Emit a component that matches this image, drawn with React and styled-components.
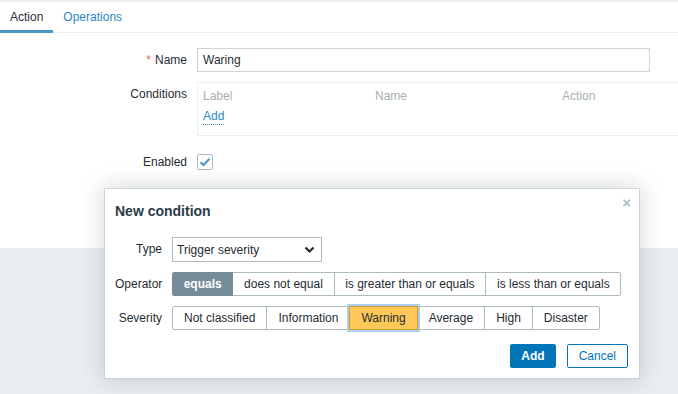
import styled, { createGlobalStyle, css } from 'styled-components'

const GlobalStyle = createGlobalStyle`
  html, body {
    margin: 0;
    padding: 0;
    background: #ebeef0;
  }
  body {
    font-family: Arial, "Liberation Sans", sans-serif;
    font-size: 12px;
    color: #1f2c33;
  }
`

const Page = styled.div`
  position: relative;
  width: 678px;
  height: 394px;
  padding-top: 2px;
  box-sizing: border-box;
  overflow: hidden;
`

const Content = styled.div`
  background: #ffffff;
  height: 246px;
`

const Tabs = styled.div`
  display: flex;
  height: 30px;
  border-bottom: 1px solid #ebeef0;
`

const Tab = styled.div`
  padding: 1px 10px 0;
  line-height: 28px;
  height: 27px;
  font-size: 12px;
  color: ${p => (p.$active ? '#1f2c33' : '#2d87c4')};
  border-bottom: 3px solid ${p => (p.$active ? '#4796c4' : 'transparent')};
`

const Form = styled.div`
  display: grid;
  grid-template-columns: 187px 1fr;
  column-gap: 10px;
  padding-top: 15px;
`

const Label = styled.div`
  text-align: right;
  line-height: 24px;
  color: #1f2c33;
  ${p => p.$top && css`padding-top: ${p.$top}px;`}
`

const Star = styled.span`
  color: #e45959;
  margin-right: 4px;
`

const Field = styled.div`
  ${p => p.$mb && css`margin-bottom: ${p.$mb}px;`}
`

const TextInput = styled.div`
  width: 453px;
  height: 24px;
  box-sizing: border-box;
  border: 1px solid #ccd5d9;
  padding: 0 5px;
  line-height: 22px;
  color: #1f2c33;
`

const CondBox = styled.div`
  border: 1px solid #ebeef0;
  border-right: none;
  height: 54px;
  box-sizing: border-box;
  padding: 3px 5px;
`

const CondHead = styled.div`
  display: grid;
  grid-template-columns: 172px 187px 1fr;
  line-height: 20px;
  color: #a4b0b7;
`

const LinkAdd = styled.span`
  display: inline-block;
  margin-top: 3px;
  color: #2d87c4;
  line-height: 15px;
  border-bottom: 1px dotted #2d87c4;
`

const Checkbox = styled.div`
  margin-top: 4px;
  width: 16px;
  height: 16px;
  box-sizing: border-box;
  border: 1px solid #acbbc2;
  border-radius: 2px;
  display: flex;
  align-items: center;
  justify-content: center;
`

const Required = styled.div`
  margin-top: 12px;
  color: #1f2c33;
`

const Dialog = styled.div`
  position: absolute;
  left: 104px;
  top: 188px;
  width: 536px;
  height: 191px;
  box-sizing: border-box;
  background: #ffffff;
  border: 1px solid #ccd5d9;
  box-shadow: 0 0 20px 2px rgba(40, 60, 70, 0.18);
  padding: 13px 11px 10px 10px;
`

const Close = styled.div`
  position: absolute;
  right: 8px;
  top: 5px;
  color: #acbbc2;
  font-size: 15px;
  font-weight: bold;
`

const Title = styled.h4`
  margin: 0 0 17px 0;
  font-size: 14px;
  font-weight: bold;
  line-height: 18px;
  color: #2c3e47;
`

const DGrid = styled.div`
  display: grid;
  grid-template-columns: 47px 1fr;
  column-gap: 10px;
  row-gap: 10px;
`

const DLabel = styled.div`
  text-align: right;
  line-height: 24px;
`

const Select = styled.div`
  width: 150px;
  height: 25px;
  box-sizing: border-box;
  border: 1px solid #acbbc2;
  display: flex;
  align-items: center;
  justify-content: space-between;
  padding: 0 6px 0 4px;
`

const Segmented = styled.div`
  display: flex;
`

const Seg = styled.div`
  height: 24px;
  box-sizing: border-box;
  padding: 0 ${p => p.$pad}px;
  line-height: 22px;
  border: 1px solid #acbbc2;
  margin-left: -1px;
  position: relative;
  white-space: nowrap;
  &:first-child {
    margin-left: 0;
    border-radius: 2px 0 0 2px;
  }
  &:last-child {
    border-radius: 0 2px 2px 0;
  }
  ${p => p.$selected && css`
    background: #768d99;
    border-color: #768d99;
    color: #ffffff;
    font-weight: bold;
    z-index: 1;
  `}
  ${p => p.$warning && css`
    background: #ffc859;
    border-color: #cf9a2f;
    box-shadow: 0 0 0 2px #a9d0f0;
    z-index: 2;
  `}
`

const Footer = styled.div`
  display: flex;
  justify-content: flex-end;
  gap: 11px;
  margin-top: 14px;
`

const Button = styled.div`
  height: 24px;
  box-sizing: border-box;
  line-height: 22px;
  border-radius: 2px;
  border: 1px solid #0275b8;
  padding: 0 ${p => (p.$primary ? 10 : 11)}px;
  background: ${p => (p.$primary ? '#0275b8' : '#ffffff')};
  color: ${p => (p.$primary ? '#ffffff' : '#0275b8')};
  font-weight: ${p => (p.$primary ? 'bold' : 'normal')};
`

const operators = ['equals', 'does not equal', 'is greater than or equals', 'is less than or equals']
const severities = ['Not classified', 'Information', 'Warning', 'Average', 'High', 'Disaster']

export default function App() {
  return (
    <Page>
      <GlobalStyle />
      <Content>
        <Tabs>
          <Tab $active>Action</Tab>
          <Tab>Operations</Tab>
        </Tabs>
        <Form>
          <Label><Star>*</Star>Name</Label>
          <Field $mb={10}><TextInput>Waring</TextInput></Field>

          <Label $top={-1}>Conditions</Label>
          <Field $mb={14}>
            <CondBox>
              <CondHead>
                <span>Label</span>
                <span>Name</span>
                <span>Action</span>
              </CondHead>
              <LinkAdd>Add</LinkAdd>
            </CondBox>
          </Field>

          <Label>Enabled</Label>
          <Field>
            <Checkbox>
              <svg width="12" height="10" viewBox="0 0 12 10">
                <path d="M1.5 5.2 L4.5 8 L10.5 1.8" fill="none" stroke="#4796c4" strokeWidth="2" />
              </svg>
            </Checkbox>
          </Field>

          <div />
          <Required><Star>*</Star>At least one operation must exist.</Required>
        </Form>
      </Content>

      <Dialog>
        <Close>×</Close>
        <Title>New condition</Title>
        <DGrid>
          <DLabel>Type</DLabel>
          <div>
            <Select>
              <span>Trigger severity</span>
              <svg width="11" height="8" viewBox="0 0 11 8">
                <path d="M1.5 1.5 L5.5 5.5 L9.5 1.5" fill="none" stroke="#1f2c33" strokeWidth="2.2" />
              </svg>
            </Select>
          </div>

          <DLabel>Operator</DLabel>
          <Segmented>
            {operators.map(o => (
              <Seg key={o} $pad={10.7} $selected={o === 'equals'}>{o}</Seg>
            ))}
          </Segmented>

          <DLabel>Severity</DLabel>
          <Segmented>
            {severities.map(s => (
              <Seg key={s} $pad={11} $warning={s === 'Warning'}>{s}</Seg>
            ))}
          </Segmented>
        </DGrid>
        <Footer>
          <Button $primary>Add</Button>
          <Button>Cancel</Button>
        </Footer>
      </Dialog>
    </Page>
  )
}
